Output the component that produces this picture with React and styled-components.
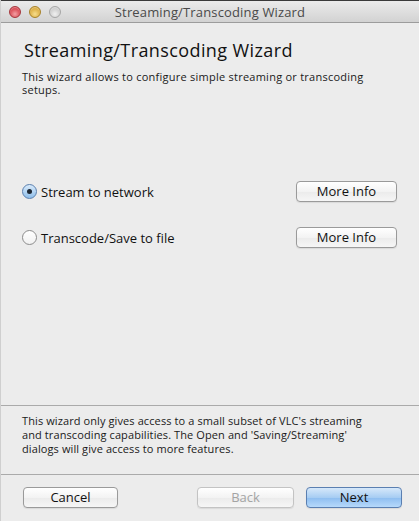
import styled, { createGlobalStyle } from "styled-components";

const GlobalStyle = createGlobalStyle`
  html, body {
    margin: 0;
    padding: 0;
    background: #ececec;
  }
  body {
    font-family: "Open Sans", "Liberation Sans", Arial, sans-serif;
    color: #1a1a1a;
  }
`;

const Window = styled.div`
  width: 419px;
  height: 521px;
  display: flex;
  flex-direction: column;
  background: #ececec;
  border-left: 1px solid #cfcfcf;
  box-sizing: border-box;
  overflow: hidden;
`;

const TitleBar = styled.div`
  height: 23px;
  flex-shrink: 0;
  position: relative;
  display: flex;
  align-items: center;
  justify-content: center;
  background: linear-gradient(#ebebeb, #d2d2d2);
  border-top: 1px solid #3a3a3a;
  border-bottom: 1px solid #9c9c9c;
  box-sizing: border-box;
`;

const Lights = styled.div`
  position: absolute;
  left: 8px;
  top: 5px;
  display: flex;
  gap: 8px;
`;

const Light = styled.span`
  width: 12px;
  height: 12px;
  border-radius: 50%;
  box-sizing: border-box;
  border: 1px solid ${(p) => p.$edge};
  background: radial-gradient(circle at 50% 70%, ${(p) => p.$light} 0%, ${(p) => p.$color} 70%);
  box-shadow: inset 0 1px 1px rgba(255, 255, 255, 0.4);
`;

const WindowTitle = styled.div`
  font-size: 13px;
  line-height: 16px;
  letter-spacing: 0.15px;
  color: #4a4a4a;
`;

const Body = styled.div`
  padding: 0 22px 0 21px;
  display: flex;
  flex-direction: column;
`;

const Heading = styled.h1`
  margin: 16px 0 0 2px;
  font-size: 18px;
  font-weight: normal;
  line-height: 22px;
  letter-spacing: 0.4px;
  color: #111;
`;

const Intro = styled.p`
  margin: 9px 0 0;
  font-size: 11px;
  line-height: 13px;
  letter-spacing: 0.25px;
  color: #1a1a1a;
`;

const Options = styled.div`
  margin-top: 85px;
  display: flex;
  flex-direction: column;
  gap: 25px;
`;

const OptionRow = styled.div`
  display: flex;
  align-items: center;
  justify-content: space-between;
  height: 21px;
`;

const RadioLabel = styled.label`
  display: flex;
  align-items: center;
  gap: 4px;
  font-size: 13px;
  color: #111;
`;

const RadioCircle = styled.span`
  width: 15px;
  height: 15px;
  border-radius: 50%;
  box-sizing: border-box;
  display: flex;
  align-items: center;
  justify-content: center;
  border: 1px solid ${(p) => (p.$checked ? "#5a7fae" : "#8c8c8c")};
  background: ${(p) =>
    p.$checked
      ? "linear-gradient(#d9ebfb, #8ebde9)"
      : "linear-gradient(#ffffff, #f1f1f1)"};
  &::after {
    content: "";
    display: ${(p) => (p.$checked ? "block" : "none")};
    width: 5px;
    height: 5px;
    border-radius: 50%;
    background: #1d2733;
  }
`;

const Button = styled.button`
  width: ${(p) => p.$w || 96}px;
  height: 21px;
  padding: 0;
  box-sizing: border-box;
  font-family: inherit;
  font-size: 13px;
  line-height: 17px;
  border-radius: 4px;
  border: 1px solid ${(p) => (p.$primary ? "#5a7fb1" : p.disabled ? "#c3c3c3" : "#9a9a9a")};
  color: ${(p) => (p.disabled ? "#a4a4a4" : "#111")};
  background: ${(p) =>
    p.$primary
      ? "linear-gradient(#d6e8fa, #a7cdf3 50%, #8dbdf0 51%, #b6d9fb)"
      : "linear-gradient(#ffffff, #f3f3f3 50%, #ebebeb 51%, #f6f6f6)"};
  box-shadow: 0 1px 1px rgba(0, 0, 0, 0.08);
`;

const Spacer = styled.div`
  flex: 1;
`;

const Divider = styled.hr`
  margin: 0;
  border: none;
  border-top: 1px solid #aaaaaa;
  flex-shrink: 0;
`;

const Note = styled.p`
  margin: 0;
  padding: 8px 40px 0 21px;
  height: 68px;
  box-sizing: border-box;
  flex-shrink: 0;
  font-size: 11px;
  line-height: 14px;
  letter-spacing: 0.1px;
  color: #1a1a1a;
`;

const Footer = styled.div`
  display: flex;
  align-items: center;
  padding: 12px 17px 13px 22px;
  gap: 12px;
`;

const lights = [
  { color: "#d6404a", light: "#f3a0a4", edge: "#a5363c" },
  { color: "#d9a93a", light: "#f6dd8c", edge: "#a88227" },
  { color: "#c9c9c9", light: "#f0f0f0", edge: "#a6a6a6" },
];

const options = [
  { label: "Stream to network", checked: true },
  { label: "Transcode/Save to file", checked: false },
];

export default function App() {
  return (
    <>
      <GlobalStyle />
      <Window>
        <TitleBar>
          <Lights>
            {lights.map((l, i) => (
              <Light key={i} $color={l.color} $light={l.light} $edge={l.edge} />
            ))}
          </Lights>
          <WindowTitle>Streaming/Transcoding Wizard</WindowTitle>
        </TitleBar>
        <Body>
          <Heading>Streaming/Transcoding Wizard</Heading>
          <Intro>
            This wizard allows to configure simple streaming or transcoding
            setups.
          </Intro>
          <Options>
            {options.map((o) => (
              <OptionRow key={o.label}>
                <RadioLabel>
                  <RadioCircle $checked={o.checked} />
                  {o.label}
                </RadioLabel>
                <Button $w={101}>More Info</Button>
              </OptionRow>
            ))}
          </Options>
        </Body>
        <Spacer />
        <Divider />
        <Note>
          This wizard only gives access to a small subset of VLC's streaming
          and transcoding capabilities. The Open and 'Saving/Streaming'
          dialogs will give access to more features.
        </Note>
        <Divider />
        <Footer>
          <Button $w={95}>Cancel</Button>
          <Spacer />
          <Button $w={97} disabled>
            Back
          </Button>
          <Button $w={96} $primary>
            Next
          </Button>
        </Footer>
      </Window>
    </>
  );
}
